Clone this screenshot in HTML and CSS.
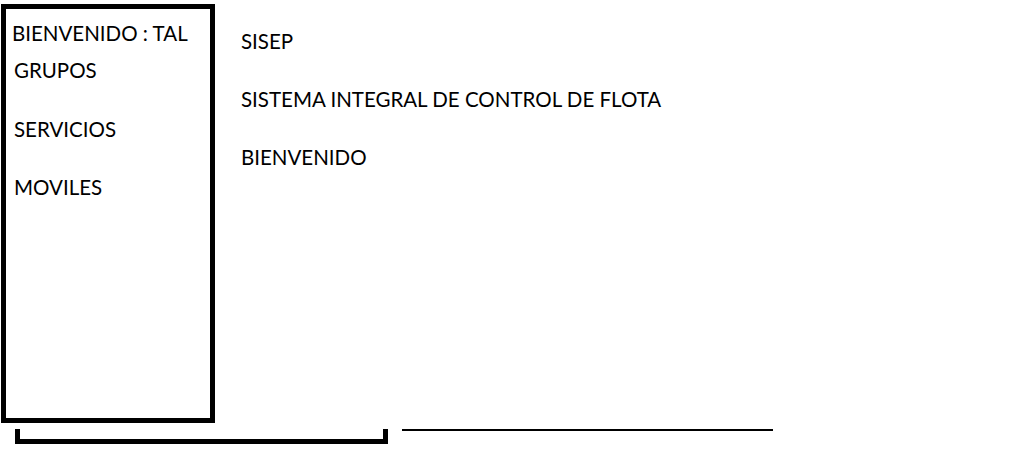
FILE: index.html
```html
<!DOCTYPE html>
<html lang="es">
<head>
<meta charset="utf-8">
<title>SISEP</title>
<link rel="stylesheet" href="styles.css">
</head>
<body>
<div class="page">
  <div class="top">
    <aside class="sidebar">
      <div class="welcome">BIENVENIDO : TAL</div>
      <ul class="menu">
        <li>GRUPOS</li>
        <li>SERVICIOS</li>
        <li>MOVILES</li>
      </ul>
    </aside>
    <main class="main">
      <p class="line">SISEP</p>
      <p class="line">SISTEMA INTEGRAL DE CONTROL DE FLOTA</p>
      <p class="line">BIENVENIDO</p>
    </main>
  </div>
  <div class="bottom">
    <div class="bracket"></div>
    <div class="rule"></div>
  </div>
</div>
</body>
</html>
```
FILE: styles.css
```css
html, body {
  margin: 0;
  padding: 0;
  background: #fff;
}
body {
  font-family: "Lato", "Open Sans", sans-serif;
  font-size: 20.5px;
  color: #000;
}
.page {
  padding: 4px 0 0 1px;
}
.top {
  display: flex;
  align-items: flex-start;
}
.sidebar {
  box-sizing: border-box;
  width: 214px;
  height: 419px;
  border: 5px solid #000;
  padding: 12px 0 0 6px;
}
.welcome {
  line-height: 24px;
}
.menu {
  list-style: none;
  margin: 13px 0 0 0;
  padding: 0 0 0 2px;
  display: flex;
  flex-direction: column;
  gap: 34.5px;
}
.menu li {
  line-height: 24px;
}
.main {
  padding: 25px 0 0 26px;
  display: flex;
  flex-direction: column;
  gap: 34px;
}
.line {
  margin: 0;
  line-height: 24px;
}
.bottom {
  display: flex;
  align-items: flex-start;
  margin-top: 6px;
  padding-left: 14px;
  gap: 14px;
}
.bracket {
  box-sizing: border-box;
  width: 373px;
  height: 15px;
  border: 5px solid #000;
  border-top: none;
}
.rule {
  width: 371px;
  height: 2px;
  background: #000;
}
```
